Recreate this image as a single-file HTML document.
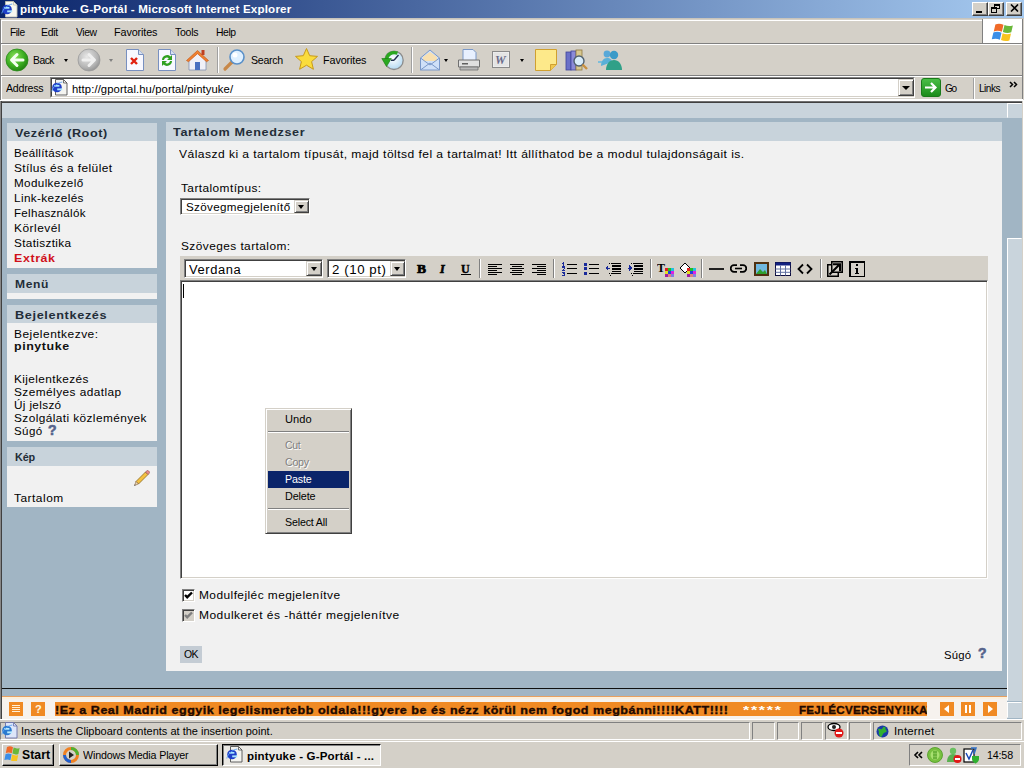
<!DOCTYPE html><html><head><meta charset="utf-8"><style>
*{margin:0;padding:0;box-sizing:border-box}
html,body{width:1024px;height:768px;overflow:hidden;position:relative;background:#d4d0c8}
body div{position:absolute}
.t{white-space:pre}
svg{display:block}
</style></head><body>
<div style="left:0px;top:0px;width:1024px;height:18px;background:linear-gradient(to right,#0a246a,#a6caf0)"></div>
<svg style="position:absolute;left:1px;top:1px" width="17" height="17" viewBox="0 0 17 17">
<path d="M4.5 0.5h8l3.5 3.5v12h-11.5z" fill="#f8f8f0" stroke="#c0c0b0" stroke-width="0.9"/>
<path d="M12.5 0.5v3.5h3.5" fill="none" stroke="#c0c0b0" stroke-width="0.8"/>
<circle cx="6" cy="8.5" r="4.8" fill="#1f3fc8"/>
<rect x="3.2" y="6" width="5.2" height="1.7" fill="#a8e4ff"/>
<rect x="6.2" y="9.4" width="5" height="1.9" fill="#a8e4ff"/>
<path d="M0.8 12.5c1-4.5 5-8.5 10.5-9.5" fill="none" stroke="#5aa0f0" stroke-width="0.9"/>
</svg>
<div class="t" style="left:19.5px;top:4px;font:bold 11px/11px 'Liberation Sans',sans-serif;color:#fff;letter-spacing:0.178px;transform:scaleX(1.0542);transform-origin:0 0;">pintyuke - G-Portál - Microsoft Internet Explorer</div>
<div style="left:972px;top:2px;width:16px;height:14px;background:#d4d0c8;border-top:1px solid #fff;border-left:1px solid #fff;border-right:1px solid #404040;border-bottom:1px solid #404040;box-shadow:inset -1px -1px #808080"></div>
<div style="left:988px;top:2px;width:16px;height:14px;background:#d4d0c8;border-top:1px solid #fff;border-left:1px solid #fff;border-right:1px solid #404040;border-bottom:1px solid #404040;box-shadow:inset -1px -1px #808080"></div>
<div style="left:1006px;top:2px;width:16px;height:14px;background:#d4d0c8;border-top:1px solid #fff;border-left:1px solid #fff;border-right:1px solid #404040;border-bottom:1px solid #404040;box-shadow:inset -1px -1px #808080"></div>
<div style="left:976px;top:11px;width:6px;height:2px;background:#000"></div>
<div style="left:994px;top:4px;width:6px;height:5px;border:1px solid #000;border-top-width:2px"></div>
<div style="left:991px;top:7px;width:6px;height:6px;border:1px solid #000;border-top-width:2px;background:#d4d0c8"></div>
<svg style="position:absolute;left:1010px;top:4px" width="9" height="8" viewBox="0 0 9 8"><path d="M1 0.5L8 7.5M8 0.5L1 7.5" stroke="#000" stroke-width="1.6"/></svg>
<div style="left:0px;top:18px;width:1024px;height:1px;background:#c8c4bc"></div>
<div style="left:0px;top:19px;width:1024px;height:749px;background:#d4d0c8"></div>
<div style="left:0px;top:19px;width:1px;height:700px;background:#808080"></div>
<div style="left:1022px;top:19px;width:1px;height:82px;background:#808080"></div>
<div style="left:1023px;top:19px;width:1px;height:82px;background:#d4d0c8"></div>
<div style="left:1px;top:20px;width:981px;height:1px;background:#fff"></div>
<div style="left:1px;top:20px;width:1px;height:24px;background:#fff"></div>
<div style="left:1px;top:43px;width:981px;height:1px;background:#808080"></div>
<div class="t" style="left:10.0px;top:27px;font:normal 11px/11px 'Liberation Sans',sans-serif;color:#000;letter-spacing:-0.469px;transform:scaleX(0.9260);transform-origin:0 0;">File</div>
<div class="t" style="left:41.0px;top:27px;font:normal 11px/11px 'Liberation Sans',sans-serif;color:#000;letter-spacing:-0.333px;transform:scaleX(0.9498);transform-origin:0 0;">Edit</div>
<div class="t" style="left:76.0px;top:27px;font:normal 11px/11px 'Liberation Sans',sans-serif;color:#000;letter-spacing:-0.477px;transform:scaleX(0.9430);transform-origin:0 0;">View</div>
<div class="t" style="left:114.0px;top:27px;font:normal 11px/11px 'Liberation Sans',sans-serif;color:#000;letter-spacing:-0.111px;transform:scaleX(0.9810);transform-origin:0 0;">Favorites</div>
<div class="t" style="left:175.0px;top:27px;font:normal 11px/11px 'Liberation Sans',sans-serif;color:#000;letter-spacing:-0.284px;transform:scaleX(0.9584);transform-origin:0 0;">Tools</div>
<div class="t" style="left:216.0px;top:27px;font:normal 11px/11px 'Liberation Sans',sans-serif;color:#000;letter-spacing:-0.442px;transform:scaleX(0.9443);transform-origin:0 0;">Help</div>
<div style="left:982px;top:19px;width:40px;height:25px;background:#fff;border-left:1px solid #808080;border-bottom:1px solid #808080"></div>
<svg style="position:absolute;left:990.6px;top:22.5px" width="27.5" height="19.8" viewBox="0 0 22 20" preserveAspectRatio="none">
<path d="M3.5 1.5c2-1 4-1 6.5 0.3l-1.3 7c-2.2-1.2-4.5-1.2-6.5-0.3z" fill="#f06a28"/>
<path d="M10.8 2c2.2 1.2 4.4 1.3 6.7 0.4l-1.3 7c-2.2 0.9-4.5 0.8-6.7-0.4z" fill="#6ab83a"/>
<path d="M1.9 9.5c2-0.9 4.3-0.9 6.5 0.3l-1.3 7c-2.2-1.2-4.5-1.2-6.5-0.3z" fill="#3a8ee8"/>
<path d="M9.3 10.3c2.2 1.2 4.4 1.3 6.7 0.4l-1.3 7c-2.2 0.9-4.5 0.8-6.7-0.4z" fill="#f8c420"/>
</svg>
<div style="left:1px;top:44px;width:1021px;height:1px;background:#fff"></div>
<div style="left:1px;top:44px;width:1px;height:32px;background:#fff"></div>
<div style="left:1px;top:75px;width:1021px;height:1px;background:#808080"></div>
<svg style="position:absolute;left:5px;top:48px" width="24" height="24" viewBox="0 0 24 24">
<defs><radialGradient id="gb" cx="0.4" cy="0.35" r="0.7"><stop offset="0" stop-color="#8de05a"/><stop offset="0.6" stop-color="#3cae22"/><stop offset="1" stop-color="#1f7d10"/></radialGradient></defs>
<circle cx="12" cy="12" r="11" fill="url(#gb)" stroke="#2a8a1a" stroke-width="0.8"/>
<path d="M18 12H7M12 6.5L6.5 12l5.5 5.5" fill="none" stroke="#f4fff0" stroke-width="3" stroke-linecap="round" stroke-linejoin="round"/>
</svg>
<div class="t" style="left:33.0px;top:55px;font:normal 11px/11px 'Liberation Sans',sans-serif;color:#000;letter-spacing:-0.523px;transform:scaleX(0.9408);transform-origin:0 0;">Back</div>
<div style="left:64px;top:59px;width:0;height:0;border-left:2.5px solid transparent;border-right:2.5px solid transparent;border-top:3px solid #000"></div>
<svg style="position:absolute;left:77px;top:48px" width="24" height="24" viewBox="0 0 24 24">
<defs><radialGradient id="gf" cx="0.4" cy="0.35" r="0.7"><stop offset="0" stop-color="#e8e8e8"/><stop offset="0.7" stop-color="#b4b4b4"/><stop offset="1" stop-color="#909090"/></radialGradient></defs>
<circle cx="12" cy="12" r="11" fill="url(#gf)" stroke="#9a9a9a" stroke-width="0.8"/>
<path d="M6 12h11M12 6.5l5.5 5.5-5.5 5.5" fill="none" stroke="#f0f0f0" stroke-width="3" stroke-linecap="round" stroke-linejoin="round"/>
</svg>
<div style="left:109px;top:59px;width:0;height:0;border-left:2.5px solid transparent;border-right:2.5px solid transparent;border-top:3px solid #808080"></div>
<svg style="position:absolute;left:124px;top:48px" width="22" height="24" viewBox="0 0 22 24">
<path d="M2.5 1.5h12l5 5v16h-17z" fill="#f8f8ff" stroke="#7890c0" stroke-width="1"/>
<path d="M14.5 1.5v5h5" fill="#d8e0f0" stroke="#7890c0" stroke-width="1"/>
<path d="M7 10l6 6M13 10l-6 6" stroke="#e02010" stroke-width="2.4"/>
</svg>
<svg style="position:absolute;left:156px;top:48px" width="22" height="24" viewBox="0 0 22 24">
<path d="M2.5 1.5h12l5 5v16h-17z" fill="#f8f8ff" stroke="#7890c0" stroke-width="1"/>
<path d="M14.5 1.5v5h5" fill="#d8e0f0" stroke="#7890c0" stroke-width="1"/>
<path d="M6 12a5 5 0 0 1 8.5-3.5l1.5-1.5v5h-5l1.8-1.8a3 3 0 0 0-4.8 1.8z" fill="#30a020"/>
<path d="M16 13a5 5 0 0 1-8.5 3.5l-1.5 1.5v-5h5l-1.8 1.8a3 3 0 0 0 4.8-1.8z" fill="#30a020"/>
</svg>
<svg style="position:absolute;left:185px;top:47px" width="25" height="25" viewBox="0 0 25 25">
<path d="M4 12v11h17v-11l-8.5-7z" fill="#f0f0f8" stroke="#8090b0" stroke-width="0.8"/>
<path d="M1.5 13.5l11-10 11 10-2 1.2-9-8-9 8z" fill="#f08030" stroke="#c05010" stroke-width="0.6"/>
<rect x="16.5" y="3" width="3" height="5" fill="#c04020"/>
<rect x="10" y="15" width="5" height="8" fill="#4a70c0"/>
</svg>
<div style="left:217px;top:47px;width:1px;height:26px;background:#a0a0a0;box-shadow:1px 0 #fff"></div>
<svg style="position:absolute;left:222px;top:48px" width="25" height="24" viewBox="0 0 25 24">
<line x1="3" y1="21" x2="10" y2="14" stroke="#c88848" stroke-width="3.2" stroke-linecap="round"/>
<circle cx="15" cy="9" r="7" fill="#dff0ff" stroke="#5a90c8" stroke-width="1.6"/>
<circle cx="13" cy="7" r="2.5" fill="#fff"/>
</svg>
<div class="t" style="left:251.0px;top:55px;font:normal 11px/11px 'Liberation Sans',sans-serif;color:#000;letter-spacing:-0.285px;transform:scaleX(0.9606);transform-origin:0 0;">Search</div>
<svg style="position:absolute;left:294px;top:47px" width="25" height="25" viewBox="0 0 25 25">
<path d="M12.5 1.5l3.2 7.2 7.8 0.7-5.9 5.2 1.8 7.7-6.9-4.1-6.9 4.1 1.8-7.7-5.9-5.2 7.8-0.7z" fill="#fadc3c" stroke="#c89a18" stroke-width="1"/>
</svg>
<div class="t" style="left:323.0px;top:55px;font:normal 11px/11px 'Liberation Sans',sans-serif;color:#000;letter-spacing:-0.111px;transform:scaleX(0.9810);transform-origin:0 0;">Favorites</div>
<svg style="position:absolute;left:380px;top:48px" width="25" height="24" viewBox="0 0 25 24">
<defs><radialGradient id="gh" cx="0.45" cy="0.4" r="0.7"><stop offset="0" stop-color="#ffffff"/><stop offset="1" stop-color="#a8d4f0"/></radialGradient></defs>
<circle cx="14" cy="12.3" r="9.2" fill="url(#gh)" stroke="#8c8c8c" stroke-width="1.3"/>
<path d="M14 12.3L18.5 7M14 12.3h-3" stroke="#203050" stroke-width="1.4" fill="none"/>
<path d="M17.5 5.2C12 3.5 7 6 6.5 11.5" fill="none" stroke="#2aa820" stroke-width="3.4"/>
<path d="M1.8 10.5h9.5l-4.8 8z" fill="#2aa820" stroke="#1a7a10" stroke-width="0.6"/>
</svg>
<div style="left:411px;top:47px;width:1px;height:26px;background:#a0a0a0;box-shadow:1px 0 #fff"></div>
<svg style="position:absolute;left:419px;top:48px" width="22" height="24" viewBox="0 0 22 24">
<path d="M1.5 10l9.5-8 9.5 8v12h-19z" fill="#cfe0f8" stroke="#7a98c8" stroke-width="1"/>
<path d="M4 9l7-5 7 5v4h-14z" fill="#f8e0b0"/>
<path d="M1.5 22l9.5-7 9.5 7M1.5 10l9.5 7 9.5-7" fill="none" stroke="#7a98c8" stroke-width="1"/>
</svg>
<div style="left:444px;top:59px;width:0;height:0;border-left:2.5px solid transparent;border-right:2.5px solid transparent;border-top:3px solid #000"></div>
<svg style="position:absolute;left:457px;top:48px" width="24" height="24" viewBox="0 0 24 24">
<path d="M6 1.5h10l3 3v8h-13z" fill="#e8f0ff" stroke="#7a98c8" stroke-width="1"/>
<path d="M1.5 12h21v7h-21z" fill="#e0e0e0" stroke="#707070" stroke-width="1"/>
<path d="M3 19h18v3h-18z" fill="#b8b8b8" stroke="#707070" stroke-width="0.8"/>
<rect x="5" y="15" width="6" height="1.5" fill="#606060"/>
</svg>
<svg style="position:absolute;left:492px;top:51px" width="18" height="17" viewBox="0 0 18 17">
<rect x="0.5" y="0.5" width="17" height="16" fill="#f4f4f4" stroke="#8a8a8a"/>
<rect x="1.5" y="1.5" width="15" height="14" fill="#e4e4e4"/>
<text x="3" y="13" font-family="Liberation Serif" font-style="italic" font-weight="bold" font-size="12" fill="#6a6a8a">W</text>
</svg>
<div style="left:520px;top:59px;width:0;height:0;border-left:2.5px solid transparent;border-right:2.5px solid transparent;border-top:3px solid #000"></div>
<svg style="position:absolute;left:534px;top:48px" width="24" height="24" viewBox="0 0 24 24">
<path d="M1.5 1.5h21v15l-6 6h-15z" fill="#fde98a" stroke="#d0a030" stroke-width="1"/>
<path d="M16.5 22.5v-6h6" fill="#f0c850" stroke="#d0a030" stroke-width="1"/>
</svg>
<svg style="position:absolute;left:565px;top:48px" width="24" height="24" viewBox="0 0 24 24">
<rect x="1" y="4" width="5" height="18" fill="#6a70c8" stroke="#40449a" stroke-width="0.8"/>
<rect x="6" y="3" width="5" height="19" fill="#8a8ad8" stroke="#40449a" stroke-width="0.8"/>
<rect x="11" y="2" width="6" height="20" fill="#d8c890" stroke="#907840" stroke-width="0.8"/>
<circle cx="14" cy="13" r="5" fill="#d8ecfa" stroke="#506070" stroke-width="1.4"/>
<line x1="17.5" y1="16.5" x2="22" y2="21" stroke="#c89040" stroke-width="2.4"/>
</svg>
<svg style="position:absolute;left:598px;top:48px" width="25" height="24" viewBox="0 0 25 24">
<circle cx="9" cy="6" r="3.4" fill="#58a8d8"/>
<path d="M3 18c0-5 2.5-8 6-8s5 2 5 4" fill="#5ab0d8"/>
<circle cx="16" cy="7" r="4.2" fill="#3a9ac8"/>
<path d="M8 22c0-6 3.5-10 8-10s8 4 8 10z" fill="#30a088"/>
<path d="M0 14l4 0" stroke="#60b8e0" stroke-width="1.5"/>
</svg>
<div style="left:1px;top:76px;width:1021px;height:1px;background:#fff"></div>
<div style="left:1px;top:76px;width:1px;height:24px;background:#fff"></div>
<div class="t" style="left:6.0px;top:83px;font:normal 11px/11px 'Liberation Sans',sans-serif;color:#000;letter-spacing:-0.246px;transform:scaleX(0.9651);transform-origin:0 0;">Address</div>
<div style="left:50px;top:77px;width:865px;height:21px;background:#fff;border-top:1px solid #808080;border-left:1px solid #808080;border-bottom:1px solid #fff;border-right:1px solid #fff"></div>
<div style="left:51px;top:78px;width:863px;height:19px;border-top:1px solid #404040;border-left:1px solid #404040;border-bottom:1px solid #d4d0c8;border-right:1px solid #d4d0c8"></div>
<svg style="position:absolute;left:51px;top:79px" width="17" height="17" viewBox="0 0 17 17">
<path d="M4.5 0.5h8l3.5 3.5v12h-11.5z" fill="#f4f4f0" stroke="#505050" stroke-width="0.9"/>
<path d="M12.5 0.5v3.5h3.5" fill="none" stroke="#505050" stroke-width="0.8"/>
<circle cx="6" cy="8.5" r="4.8" fill="#1f3fc8"/>
<rect x="3.2" y="6" width="5.2" height="1.7" fill="#a8e4ff"/>
<rect x="6.2" y="9.4" width="5" height="1.9" fill="#a8e4ff"/>
<path d="M0.8 12.5c1-4.5 5-8.5 10.5-9.5" fill="none" stroke="#5aa0f0" stroke-width="0.9"/>
</svg>
<div class="t" style="left:72.0px;top:84px;font:normal 11px/11px 'Liberation Sans',sans-serif;color:#000;letter-spacing:0.103px;transform:scaleX(1.0224);transform-origin:0 0;">http://gportal.hu/portal/pintyuke/</div>
<div style="left:898px;top:79px;width:16px;height:17px;background:#d4d0c8;border-top:1px solid #d4d0c8;border-left:1px solid #d4d0c8;border-right:1px solid #404040;border-bottom:1px solid #404040;box-shadow:inset 1px 1px #fff,inset -1px -1px #808080"></div>
<div style="left:902px;top:86px;width:0;height:0;border-left:4px solid transparent;border-right:4px solid transparent;border-top:4px solid #000"></div>
<svg style="position:absolute;left:921px;top:78px" width="20" height="19" viewBox="0 0 20 19">
<defs><linearGradient id="gg" x1="0" y1="0" x2="0" y2="1"><stop offset="0" stop-color="#4cc048"/><stop offset="1" stop-color="#1a8a1a"/></linearGradient></defs>
<rect x="0.5" y="0.5" width="19" height="18" rx="2.5" fill="url(#gg)" stroke="#1a7a1a"/>
<path d="M4 9.5h10M10 5l4.5 4.5-4.5 4.5" fill="none" stroke="#fff" stroke-width="2.2"/>
</svg>
<div class="t" style="left:945.0px;top:83px;font:normal 11px/11px 'Liberation Sans',sans-serif;color:#000;letter-spacing:-1.401px;transform:scaleX(0.9122);transform-origin:0 0;">Go</div>
<div style="left:973px;top:78px;width:1px;height:21px;background:#a0a0a0;box-shadow:1px 0 #fff"></div>
<div class="t" style="left:979.0px;top:83px;font:normal 11px/11px 'Liberation Sans',sans-serif;color:#000;letter-spacing:-0.568px;transform:scaleX(0.9202);transform-origin:0 0;">Links</div>
<svg style="position:absolute;left:1009px;top:81px" width="10" height="7" viewBox="0 0 10 7"><path d="M1 1l2.5 2.5L1 6M5 1l2.5 2.5L5 6" fill="none" stroke="#000" stroke-width="1.5"/></svg>
<div style="left:1px;top:99px;width:1022px;height:1px;background:#fff"></div>
<div style="left:0px;top:100px;width:1024px;height:1px;background:#fff"></div>
<div style="left:0px;top:101px;width:1023px;height:1px;background:#707070"></div>
<div style="left:0px;top:102px;width:1023px;height:1px;background:#404040"></div>
<div style="left:0px;top:101px;width:1px;height:618px;background:#888888"></div>
<div style="left:1px;top:101px;width:1px;height:618px;background:#404040"></div>
<div style="left:1022px;top:101px;width:1px;height:618px;background:#d4d0c8"></div>
<div style="left:1023px;top:101px;width:1px;height:618px;background:#fff"></div>
<div style="left:2px;top:103px;width:1020px;height:616px;background:#a1b5c4"></div>
<div style="left:2px;top:103px;width:1005px;height:15px;background:#c9d4dc"></div>
<div style="left:7px;top:123px;width:150px;height:145px;background:#f1f1f1"></div>
<div style="left:7px;top:123px;width:150px;height:18px;background:#c8d3db"></div>
<div class="t" style="left:14.5px;top:128px;font:bold 11px/11px 'Liberation Sans',sans-serif;color:#232d38;letter-spacing:0.489px;transform:scaleX(1.1471);transform-origin:0 0;">Vezérlő (Root)</div>
<div class="t" style="left:14.0px;top:148px;font:normal 11px/11px 'Liberation Sans',sans-serif;color:#000;letter-spacing:0.270px;transform:scaleX(1.0524);transform-origin:0 0;">Beállítások</div>
<div class="t" style="left:14.0px;top:163px;font:normal 11px/11px 'Liberation Sans',sans-serif;color:#000;letter-spacing:0.366px;transform:scaleX(1.0853);transform-origin:0 0;">Stílus és a felület</div>
<div class="t" style="left:14.0px;top:178px;font:normal 11px/11px 'Liberation Sans',sans-serif;color:#000;letter-spacing:0.347px;transform:scaleX(1.0597);transform-origin:0 0;">Modulkezelő</div>
<div class="t" style="left:14.0px;top:193px;font:normal 11px/11px 'Liberation Sans',sans-serif;color:#000;letter-spacing:0.356px;transform:scaleX(1.0678);transform-origin:0 0;">Link-kezelés</div>
<div class="t" style="left:14.0px;top:208px;font:normal 11px/11px 'Liberation Sans',sans-serif;color:#000;letter-spacing:0.289px;transform:scaleX(1.0512);transform-origin:0 0;">Felhasználók</div>
<div class="t" style="left:14.0px;top:223px;font:normal 11px/11px 'Liberation Sans',sans-serif;color:#000;letter-spacing:0.441px;transform:scaleX(1.0853);transform-origin:0 0;">Körlevél</div>
<div class="t" style="left:14.0px;top:238px;font:normal 11px/11px 'Liberation Sans',sans-serif;color:#000;letter-spacing:0.327px;transform:scaleX(1.0685);transform-origin:0 0;">Statisztika</div>
<div class="t" style="left:14.0px;top:253px;font:bold 11px/11px 'Liberation Sans',sans-serif;color:#d0101a;letter-spacing:0.530px;transform:scaleX(1.1301);transform-origin:0 0;">Extrák</div>
<div style="left:7px;top:274px;width:150px;height:25px;background:#f1f1f1"></div>
<div style="left:7px;top:274px;width:150px;height:19px;background:#c8d3db"></div>
<div class="t" style="left:14.5px;top:279px;font:bold 11px/11px 'Liberation Sans',sans-serif;color:#232d38;letter-spacing:0.547px;transform:scaleX(1.0964);transform-origin:0 0;">Menü</div>
<div style="left:7px;top:305px;width:150px;height:136px;background:#f1f1f1"></div>
<div style="left:7px;top:305px;width:150px;height:18px;background:#c8d3db"></div>
<div class="t" style="left:14.5px;top:310px;font:bold 11px/11px 'Liberation Sans',sans-serif;color:#232d38;letter-spacing:0.544px;transform:scaleX(1.1557);transform-origin:0 0;">Bejelentkezés</div>
<div class="t" style="left:14.0px;top:329px;font:normal 11px/11px 'Liberation Sans',sans-serif;color:#000;letter-spacing:0.443px;transform:scaleX(1.0875);transform-origin:0 0;">Bejelentkezve:</div>
<div class="t" style="left:14.0px;top:341px;font:bold 11px/11px 'Liberation Sans',sans-serif;color:#111;letter-spacing:0.499px;transform:scaleX(1.1315);transform-origin:0 0;">pinytuke</div>
<div class="t" style="left:14.0px;top:374px;font:normal 11px/11px 'Liberation Sans',sans-serif;color:#000;letter-spacing:0.376px;transform:scaleX(1.0742);transform-origin:0 0;">Kijelentkezés</div>
<div class="t" style="left:14.0px;top:387px;font:normal 11px/11px 'Liberation Sans',sans-serif;color:#000;letter-spacing:0.412px;transform:scaleX(1.0764);transform-origin:0 0;">Személyes adatlap</div>
<div class="t" style="left:14.0px;top:400px;font:normal 11px/11px 'Liberation Sans',sans-serif;color:#000;letter-spacing:0.325px;transform:scaleX(1.0670);transform-origin:0 0;">Új jelszó</div>
<div class="t" style="left:14.0px;top:413px;font:normal 11px/11px 'Liberation Sans',sans-serif;color:#000;letter-spacing:0.388px;transform:scaleX(1.0760);transform-origin:0 0;">Szolgálati közlemények</div>
<div class="t" style="left:14.0px;top:426px;font:normal 11px/11px 'Liberation Sans',sans-serif;color:#000;letter-spacing:0.386px;transform:scaleX(1.0475);transform-origin:0 0;">Súgó</div>
<div class="t" style="left:48.0px;top:423px;font:bold 14px/14px 'Liberation Sans',sans-serif;color:#56648c;letter-spacing:0.000px;-webkit-text-stroke:0.6px #56648c">?</div>
<div style="left:7px;top:447px;width:150px;height:60px;background:#f1f1f1"></div>
<div style="left:7px;top:447px;width:150px;height:19px;background:#c8d3db"></div>
<div class="t" style="left:14.5px;top:452px;font:bold 11px/11px 'Liberation Sans',sans-serif;color:#232d38;letter-spacing:-0.114px;transform:scaleX(0.9840);transform-origin:0 0;">Kép</div>
<svg style="position:absolute;left:133px;top:470px" width="17" height="17" viewBox="0 0 17 17">
<path d="M3 11.5L12.5 2l2.5 2.5L5.5 14z" fill="#f4c040" stroke="#8a6a20" stroke-width="0.8"/>
<path d="M12.5 2l1.2-1.2a1.2 1.2 0 0 1 1.7 0l0.8 0.8a1.2 1.2 0 0 1 0 1.7L15 4.5z" fill="#e88a8a" stroke="#8a4a4a" stroke-width="0.6"/>
<path d="M3 11.5l2.5 2.5-3.8 1.3z" fill="#f0d8b0" stroke="#806040" stroke-width="0.6"/>
<path d="M1.2 15.8l1.4-0.5-0.9-0.9z" fill="#222"/>
</svg>
<div class="t" style="left:14.0px;top:493px;font:normal 11px/11px 'Liberation Sans',sans-serif;color:#000;letter-spacing:0.461px;transform:scaleX(1.0831);transform-origin:0 0;">Tartalom</div>
<div style="left:166px;top:122px;width:836px;height:549px;background:#f1f1f1"></div>
<div style="left:166px;top:122px;width:836px;height:19px;background:#c8d3db"></div>
<div class="t" style="left:173.2px;top:127px;font:bold 11px/11px 'Liberation Sans',sans-serif;color:#232d38;letter-spacing:0.536px;transform:scaleX(1.1476);transform-origin:0 0;">Tartalom Menedzser</div>
<div class="t" style="left:179.0px;top:149px;font:normal 11px/11px 'Liberation Sans',sans-serif;color:#000;letter-spacing:0.409px;transform:scaleX(1.0978);transform-origin:0 0;">Válaszd ki a tartalom típusát, majd töltsd fel a tartalmat! Itt állíthatod be a modul tulajdonságait is.</div>
<div class="t" style="left:181.0px;top:183px;font:normal 11px/11px 'Liberation Sans',sans-serif;color:#000;letter-spacing:0.391px;transform:scaleX(1.0795);transform-origin:0 0;">Tartalomtípus:</div>
<div style="left:180px;top:198px;width:130px;height:17px;background:#fff;border-top:1px solid #808080;border-left:1px solid #808080;border-bottom:1px solid #fff;border-right:1px solid #fff;box-shadow:inset 1px 1px #404040,inset -1px -1px #d4d0c8"></div>
<div class="t" style="left:186.0px;top:202px;font:normal 11px/11px 'Liberation Sans',sans-serif;color:#000;letter-spacing:0.312px;transform:scaleX(1.0565);transform-origin:0 0;">Szövegmegjelenítő</div>
<div style="left:294px;top:200px;width:15px;height:13px;background:#d4d0c8;border-top:1px solid #d4d0c8;border-left:1px solid #d4d0c8;border-bottom:1px solid #404040;border-right:1px solid #404040;box-shadow:inset 1px 1px #fff,inset -1px -1px #808080"></div>
<div style="left:297.5px;top:205px;width:0;height:0;border-left:3.5px solid transparent;border-right:3.5px solid transparent;border-top:4px solid #000"></div>
<div class="t" style="left:181.0px;top:241px;font:normal 11px/11px 'Liberation Sans',sans-serif;color:#000;letter-spacing:0.406px;transform:scaleX(1.0792);transform-origin:0 0;">Szöveges tartalom:</div>
<div style="left:180px;top:256px;width:808px;height:24px;background:#d4d0c8"></div>
<div style="left:184px;top:259px;width:139px;height:19px;background:#fff;border-top:1px solid #808080;border-left:1px solid #808080;border-bottom:1px solid #fff;border-right:1px solid #fff;box-shadow:inset 1px 1px #404040,inset -1px -1px #d4d0c8"></div>
<div class="t" style="left:189.0px;top:264px;font:normal 12px/12px 'Liberation Sans',sans-serif;color:#000;letter-spacing:0.539px;transform:scaleX(1.0774);transform-origin:0 0;">Verdana</div>
<div style="left:306px;top:261px;width:16px;height:15px;background:#d4d0c8;border-top:1px solid #d4d0c8;border-left:1px solid #d4d0c8;border-bottom:1px solid #404040;border-right:1px solid #404040;box-shadow:inset 1px 1px #fff,inset -1px -1px #808080"></div>
<div style="left:310.5px;top:267px;width:0;height:0;border-left:3.5px solid transparent;border-right:3.5px solid transparent;border-top:4px solid #000"></div>
<div style="left:327px;top:259px;width:79px;height:19px;background:#fff;border-top:1px solid #808080;border-left:1px solid #808080;border-bottom:1px solid #fff;border-right:1px solid #fff;box-shadow:inset 1px 1px #404040,inset -1px -1px #d4d0c8"></div>
<div class="t" style="left:332.0px;top:264px;font:normal 12px/12px 'Liberation Sans',sans-serif;color:#000;letter-spacing:0.527px;transform:scaleX(1.1041);transform-origin:0 0;">2 (10 pt)</div>
<div style="left:390px;top:261px;width:15px;height:15px;background:#d4d0c8;border-top:1px solid #d4d0c8;border-left:1px solid #d4d0c8;border-bottom:1px solid #404040;border-right:1px solid #404040;box-shadow:inset 1px 1px #fff,inset -1px -1px #808080"></div>
<div style="left:393.5px;top:267px;width:0;height:0;border-left:3.5px solid transparent;border-right:3.5px solid transparent;border-top:4px solid #000"></div>
<div style="left:479px;top:259px;width:1px;height:19px;background:#808080;box-shadow:1px 0 #fff"></div>
<div style="left:553px;top:259px;width:1px;height:19px;background:#808080;box-shadow:1px 0 #fff"></div>
<div style="left:650px;top:259px;width:1px;height:19px;background:#808080;box-shadow:1px 0 #fff"></div>
<div style="left:701px;top:259px;width:1px;height:19px;background:#808080;box-shadow:1px 0 #fff"></div>
<div style="left:820px;top:259px;width:1px;height:19px;background:#808080;box-shadow:1px 0 #fff"></div>
<div class="t" style="left:417.0px;top:263px;font:bold 12px/12px 'Liberation Serif',serif;color:#000;letter-spacing:0.000px;transform:scaleX(1.1250);transform-origin:0 0;-webkit-text-stroke:0.7px #000">B</div>
<div class="t" style="left:440.0px;top:263px;font:bold 12px/12px 'Liberation Serif',serif;color:#000;letter-spacing:0.000px;font-style:italic;-webkit-text-stroke:0.6px #000">I</div>
<div class="t" style="left:461.0px;top:263px;font:bold 12px/12px 'Liberation Serif',serif;color:#000;letter-spacing:0.000px;-webkit-text-stroke:0.4px #000">U</div>
<div style="left:461px;top:274px;width:10px;height:1px;background:#000"></div>
<div style="left:488px;top:264px;width:14px;height:1px;background:#000"></div>
<div style="left:488px;top:266px;width:9px;height:1px;background:#000"></div>
<div style="left:488px;top:268px;width:14px;height:1px;background:#000"></div>
<div style="left:488px;top:270px;width:9px;height:1px;background:#000"></div>
<div style="left:488px;top:272px;width:14px;height:1px;background:#000"></div>
<div style="left:488px;top:274px;width:9px;height:1px;background:#000"></div>
<div style="left:510px;top:264px;width:14px;height:1px;background:#000"></div>
<div style="left:512px;top:266px;width:10px;height:1px;background:#000"></div>
<div style="left:510px;top:268px;width:14px;height:1px;background:#000"></div>
<div style="left:512px;top:270px;width:10px;height:1px;background:#000"></div>
<div style="left:510px;top:272px;width:14px;height:1px;background:#000"></div>
<div style="left:512px;top:274px;width:10px;height:1px;background:#000"></div>
<div style="left:532px;top:264px;width:14px;height:1px;background:#000"></div>
<div style="left:537px;top:266px;width:9px;height:1px;background:#000"></div>
<div style="left:532px;top:268px;width:14px;height:1px;background:#000"></div>
<div style="left:537px;top:270px;width:9px;height:1px;background:#000"></div>
<div style="left:532px;top:272px;width:14px;height:1px;background:#000"></div>
<div style="left:537px;top:274px;width:9px;height:1px;background:#000"></div>
<svg style="position:absolute;left:562px;top:262px" width="16" height="14" viewBox="0 0 16 14" shape-rendering="crispEdges">
<path d="M1 0h1v4h-1zM0 1h1v1h-1zM0 4h3v1h-3z" fill="#1a2a9a"/>
<path d="M0 5h3v1h-3zM2 6h1v1h-1zM1 7h1v1h-1zM0 8h3v1h-3z" fill="#1a2a9a"/>
<path d="M0 10h3v1h-3zM2 11h1v1h-1zM1 11h1v1h-1zM2 12h1v1h-1zM0 13h3v1h-3z" fill="#1a2a9a"/>
<rect x="5" y="2" width="10" height="1" fill="#000"/><rect x="5" y="6" width="10" height="1" fill="#000"/><rect x="5" y="11" width="10" height="1" fill="#000"/>
</svg>
<svg style="position:absolute;left:584px;top:262px" width="15" height="14" viewBox="0 0 15 14" shape-rendering="crispEdges">
<rect x="0" y="1" width="3" height="3" fill="#1a2a9a"/><rect x="0" y="5" width="3" height="3" fill="#1a2a9a"/><rect x="0" y="10" width="3" height="3" fill="#1a2a9a"/>
<rect x="5" y="2" width="10" height="1" fill="#000"/><rect x="5" y="6" width="10" height="1" fill="#000"/><rect x="5" y="11" width="10" height="1" fill="#000"/>
</svg>
<svg style="position:absolute;left:605px;top:262px" width="17" height="14" viewBox="0 0 17 14" shape-rendering="crispEdges">
<path d="M0 6l3-3v6z" fill="#1a2a9a"/><rect x="1" y="6" width="4" height="1" fill="#1a2a9a"/>
<rect x="6" y="1" width="10" height="1" fill="#000"/><rect x="7" y="3" width="9" height="2" fill="#000"/><rect x="7" y="6" width="9" height="2" fill="#000"/><rect x="7" y="9" width="9" height="1" fill="#000"/><rect x="6" y="11" width="10" height="1" fill="#000"/>
<rect x="4" y="1" width="1" height="1" fill="#000"/><rect x="4" y="11" width="1" height="1" fill="#000"/><rect x="5" y="13" width="1" height="1" fill="#000"/>
</svg>
<svg style="position:absolute;left:627px;top:262px" width="17" height="14" viewBox="0 0 17 14" shape-rendering="crispEdges">
<path d="M5 6l-3-3v6z" fill="#1a2a9a"/><rect x="1" y="6" width="4" height="1" fill="#1a2a9a"/>
<rect x="6" y="1" width="10" height="1" fill="#000"/><rect x="7" y="3" width="9" height="2" fill="#000"/><rect x="7" y="6" width="9" height="2" fill="#000"/><rect x="7" y="9" width="9" height="1" fill="#000"/><rect x="6" y="11" width="10" height="1" fill="#000"/>
<rect x="4" y="1" width="1" height="1" fill="#000"/><rect x="4" y="11" width="1" height="1" fill="#000"/><rect x="5" y="13" width="1" height="1" fill="#000"/>
</svg>
<svg style="position:absolute;left:657px;top:262px" width="17" height="15" viewBox="0 0 17 15">
<text x="0" y="10" font-family="Liberation Serif" font-size="12" font-weight="bold" fill="#000">T</text>
<rect x="8" y="6" width="3" height="3" fill="#e02020"/><rect x="11" y="6" width="3" height="3" fill="#20c020"/><rect x="14" y="6" width="3" height="3" fill="#20c0e0"/>
<rect x="8" y="9" width="3" height="3" fill="#e0e020"/><rect x="11" y="9" width="3" height="3" fill="#2040e0"/><rect x="14" y="9" width="3" height="3" fill="#e020e0"/>
<rect x="8" y="12" width="3" height="3" fill="#a020a0"/><rect x="11" y="12" width="3" height="3" fill="#e08080"/><rect x="14" y="12" width="3" height="3" fill="#8080e0"/>
</svg>
<svg style="position:absolute;left:679px;top:262px" width="17" height="15" viewBox="0 0 17 15">
<path d="M1 6l5-5 5 5-5 5z" fill="#fff" stroke="#000" stroke-width="1"/>
<rect x="8" y="6" width="3" height="3" fill="#e02020"/><rect x="11" y="6" width="3" height="3" fill="#20c020"/><rect x="14" y="6" width="3" height="3" fill="#20c0e0"/>
<rect x="8" y="9" width="3" height="3" fill="#e0e020"/><rect x="11" y="9" width="3" height="3" fill="#2040e0"/><rect x="14" y="9" width="3" height="3" fill="#e020e0"/>
<rect x="8" y="12" width="3" height="3" fill="#a020a0"/><rect x="11" y="12" width="3" height="3" fill="#e08080"/><rect x="14" y="12" width="3" height="3" fill="#8080e0"/>
</svg>
<div style="left:709px;top:268px;width:15px;height:2px;background:#202020"></div>
<svg style="position:absolute;left:730px;top:264px" width="17" height="9" viewBox="0 0 17 9">
<path d="M7 1.2H4a3.3 3.3 0 0 0 0 6.6h3M10 1.2h3a3.3 3.3 0 0 1 0 6.6h-3" fill="none" stroke="#000" stroke-width="1.8"/>
<path d="M5 4.5h7" stroke="#000" stroke-width="1.6"/>
</svg>
<svg style="position:absolute;left:754px;top:262px" width="15" height="14" viewBox="0 0 15 14">
<rect x="0" y="0" width="15" height="14" fill="#503010"/>
<rect x="2" y="2" width="11" height="10" fill="#70b8e0"/>
<path d="M2 12l4-5 3 3 2-2 2 4z" fill="#30a030"/>
</svg>
<svg style="position:absolute;left:775px;top:262px" width="16" height="14" viewBox="0 0 16 14">
<rect x="0.5" y="0.5" width="15" height="13" fill="#fff" stroke="#101040"/>
<rect x="0.5" y="0.5" width="15" height="3" fill="#102080"/>
<path d="M0.5 7h15M0.5 10.3h15M5.5 3.5v10M10.5 3.5v10" stroke="#6070a0" stroke-width="1"/>
</svg>
<svg style="position:absolute;left:797px;top:263px" width="16" height="12" viewBox="0 0 16 12">
<path d="M6 1.5L1.5 6 6 10.5M10 1.5L14.5 6 10 10.5" fill="none" stroke="#000" stroke-width="1.8"/>
</svg>
<svg style="position:absolute;left:827px;top:261px" width="17" height="17" viewBox="0 0 17 17">
<rect x="0.75" y="3.75" width="10.5" height="11.5" fill="none" stroke="#000" stroke-width="1.5"/>
<rect x="4.75" y="0.75" width="10.5" height="10.5" fill="#d4d0c8" stroke="#000" stroke-width="1.5"/>
<path d="M2.5 13.5L12.5 3.5M6 3.2h7v7" fill="none" stroke="#000" stroke-width="2"/>
</svg>
<svg style="position:absolute;left:849px;top:261px" width="16" height="16" viewBox="0 0 16 16" shape-rendering="crispEdges">
<rect x="0.75" y="0.75" width="14.5" height="14.5" fill="none" stroke="#000" stroke-width="1.5"/>
<rect x="7" y="3" width="2" height="2" fill="#000"/>
<rect x="7" y="7" width="2" height="6" fill="#000"/><rect x="6" y="7" width="1" height="1" fill="#000"/><rect x="6" y="12" width="4" height="1" fill="#000"/>
</svg>
<div style="left:180px;top:280px;width:808px;height:299px;background:#fff;border-top:1px solid #808080;border-left:1px solid #808080;border-bottom:1px solid #fff;border-right:1px solid #fff;box-shadow:inset 1px 1px #404040,inset -1px -1px #d4d0c8"></div>
<div style="left:183px;top:284px;width:1px;height:14px;background:#000"></div>
<div style="left:265px;top:408px;width:87px;height:126px;background:#d4d0c8;border-top:1px solid #d4d0c8;border-left:1px solid #d4d0c8;border-bottom:1px solid #404040;border-right:1px solid #404040;box-shadow:inset 1px 1px #fff,inset -1px -1px #808080"></div>
<div class="t" style="left:284.5px;top:414px;font:normal 11px/11px 'Liberation Sans',sans-serif;color:#000;letter-spacing:0.053px;transform:scaleX(1.0061);transform-origin:0 0;">Undo</div>
<div style="left:268px;top:431px;width:81px;height:1px;background:#808080;box-shadow:0 1px #fff"></div>
<div class="t" style="left:284.5px;top:440px;font:normal 11px/11px 'Liberation Sans',sans-serif;color:#808080;letter-spacing:-0.409px;transform:scaleX(0.9542);transform-origin:0 0;text-shadow:1px 1px #fff">Cut</div>
<div class="t" style="left:284.5px;top:457px;font:normal 11px/11px 'Liberation Sans',sans-serif;color:#808080;letter-spacing:-0.289px;transform:scaleX(0.9679);transform-origin:0 0;text-shadow:1px 1px #fff">Copy</div>
<div style="left:268px;top:471px;width:81px;height:17px;background:#0a246a"></div>
<div class="t" style="left:284.5px;top:474px;font:normal 11px/11px 'Liberation Sans',sans-serif;color:#fff;letter-spacing:-0.194px;transform:scaleX(0.9730);transform-origin:0 0;">Paste</div>
<div class="t" style="left:284.5px;top:491px;font:normal 11px/11px 'Liberation Sans',sans-serif;color:#000;letter-spacing:-0.120px;transform:scaleX(0.9814);transform-origin:0 0;">Delete</div>
<div style="left:268px;top:508px;width:81px;height:1px;background:#808080;box-shadow:0 1px #fff"></div>
<div class="t" style="left:284.5px;top:517px;font:normal 11px/11px 'Liberation Sans',sans-serif;color:#000;letter-spacing:-0.167px;transform:scaleX(0.9680);transform-origin:0 0;">Select All</div>
<div style="left:182px;top:589px;width:13px;height:13px;background:#fff;border-top:1px solid #808080;border-left:1px solid #808080;border-bottom:1px solid #fff;border-right:1px solid #fff;box-shadow:inset 1px 1px #404040,inset -1px -1px #d4d0c8"></div>
<svg style="position:absolute;left:182px;top:589px" width="13" height="13" viewBox="0 0 13 13"><path d="M3 6l2.2 2.2L10 3.5" fill="none" stroke="#000" stroke-width="2.4"/></svg>
<div style="left:182px;top:609px;width:13px;height:13px;background:#d4d0c8;border-top:1px solid #808080;border-left:1px solid #808080;border-bottom:1px solid #fff;border-right:1px solid #fff;box-shadow:inset 1px 1px #404040,inset -1px -1px #d4d0c8"></div>
<svg style="position:absolute;left:182px;top:609px" width="13" height="13" viewBox="0 0 13 13"><path d="M3 6l2.2 2.2L10 3.5" fill="none" stroke="#808080" stroke-width="2.4"/></svg>
<div class="t" style="left:199.0px;top:590px;font:normal 11px/11px 'Liberation Sans',sans-serif;color:#000;letter-spacing:0.403px;transform:scaleX(1.0829);transform-origin:0 0;">Modulfejléc megjelenítve</div>
<div class="t" style="left:199.0px;top:610px;font:normal 11px/11px 'Liberation Sans',sans-serif;color:#000;letter-spacing:0.427px;transform:scaleX(1.0909);transform-origin:0 0;">Modulkeret és -háttér megjelenítve</div>
<div style="left:180px;top:646px;width:22px;height:17px;background:#c4ccd4"></div>
<div class="t" style="left:184.0px;top:649px;font:normal 11px/11px 'Liberation Sans',sans-serif;color:#000;letter-spacing:-0.816px;transform:scaleX(0.9530);transform-origin:0 0;">OK</div>
<div class="t" style="left:944.0px;top:650px;font:normal 11px/11px 'Liberation Sans',sans-serif;color:#000;letter-spacing:0.231px;transform:scaleX(1.0279);transform-origin:0 0;">Súgó</div>
<div class="t" style="left:978.0px;top:646px;font:bold 14px/14px 'Liberation Sans',sans-serif;color:#56648c;letter-spacing:0.000px;-webkit-text-stroke:0.6px #56648c">?</div>
<div style="left:2px;top:688px;width:1005px;height:1px;background:#101010"></div>
<div style="left:1007px;top:103px;width:15px;height:15px;background:#c9d4dc;border-top:1px solid #fff;border-left:1px solid #fff;border-right:1px solid #c9d4dc;border-bottom:1px solid #c9d4dc"></div>
<div style="left:1007px;top:238px;width:15px;height:463px;background:#c9d4dc;border-top:1px solid #fff;border-left:1px solid #fff;border-right:1px solid #c9d4dc;border-bottom:1px solid #c9d4dc"></div>
<div style="left:1007px;top:702px;width:15px;height:16px;background:#c9d4dc;border-top:1px solid #fff;border-left:1px solid #fff;border-right:1px solid #c9d4dc;border-bottom:1px solid #c9d4dc"></div>
<div style="left:2px;top:696px;width:1005px;height:1px;background:#e8a060"></div>
<div style="left:2px;top:697px;width:1005px;height:22px;background:#f6f2ee"></div>
<div style="left:2px;top:697px;width:1005px;height:2px;background:#fbf0dc"></div>
<div style="left:9px;top:702px;width:14px;height:14px;background:#f08a24"></div>
<div style="left:12px;top:705px;width:8px;height:1px;background:#fff0d8"></div>
<div style="left:12px;top:707px;width:8px;height:1px;background:#fff0d8"></div>
<div style="left:12px;top:709px;width:8px;height:1px;background:#fff0d8"></div>
<div style="left:12px;top:711px;width:8px;height:1px;background:#fff0d8"></div>
<div style="left:31px;top:702px;width:14px;height:14px;background:#f08a24"></div>
<div class="t" style="left:35px;top:704px;font:bold 11px/11px 'Liberation Sans',sans-serif;color:#fff8e0;">?</div>
<div style="left:55px;top:702px;width:872px;height:14px;background:#f08a24;overflow:hidden"></div>
<div style="left:55px;top:702px;width:872px;height:14px;overflow:hidden">
<div class="t" style="left:-0.14px;top:3px;font:bold 11px/11px 'Liberation Sans',sans-serif;color:#200800;letter-spacing:0.443px;transform:scaleX(1.1410);transform-origin:0 0;-webkit-text-stroke:0.35px #200800">!Ez a Real Madrid eggyik legelismertebb oldala!!!gyere be és nézz körül nem fogod megbánni!!!!KATT!!!!</div>
<div class="t" style="left:688.0px;top:3px;font:bold 11px/11px 'Liberation Sans',sans-serif;color:#fff;letter-spacing:1.158px;transform:scaleX(1.4577);transform-origin:0 0;">*****</div>
<div class="t" style="left:744.0px;top:3px;font:bold 11px/11px 'Liberation Sans',sans-serif;color:#200800;letter-spacing:0.231px;transform:scaleX(1.0557);transform-origin:0 0;-webkit-text-stroke:0.35px #200800">FEJLÉCVERSENY!!KATT!!!!</div>
</div>
<div style="left:940px;top:702px;width:14px;height:14px;background:#f08a24"></div>
<div style="left:944px;top:705px;width:0;height:0;border-top:4px solid transparent;border-bottom:4px solid transparent;border-right:5px solid #fff"></div>
<div style="left:961px;top:702px;width:14px;height:14px;background:#f08a24"></div>
<div style="left:965px;top:705px;width:2px;height:8px;background:#fff"></div>
<div style="left:969px;top:705px;width:2px;height:8px;background:#fff"></div>
<div style="left:983px;top:702px;width:14px;height:14px;background:#f08a24"></div>
<div style="left:988px;top:705px;width:0;height:0;border-top:4px solid transparent;border-bottom:4px solid transparent;border-left:5px solid #fff"></div>
<div style="left:0px;top:719px;width:1024px;height:1px;background:#fff"></div>
<div style="left:0px;top:720px;width:1024px;height:21px;background:#d4d0c8"></div>
<div style="left:0px;top:722px;width:750px;height:18px;border-top:1px solid #808080;border-left:1px solid #808080;border-bottom:1px solid #fff;border-right:1px solid #fff"></div>
<svg style="position:absolute;left:1px;top:722px" width="17" height="17" viewBox="0 0 17 17">
<path d="M4.5 0.5h8l3.5 3.5v12h-11.5z" fill="#dde6fa" stroke="#6a70a8" stroke-width="0.9"/>
<path d="M12.5 0.5v3.5h3.5" fill="none" stroke="#6a70a8" stroke-width="0.8"/>
<circle cx="6" cy="8.5" r="4.8" fill="#2a7ad0"/>
<rect x="3.2" y="6" width="5.2" height="1.7" fill="#b8ecff"/>
<rect x="6.2" y="9.4" width="5" height="1.9" fill="#b8ecff"/>
<path d="M0.8 12.5c1-4.5 5-8.5 10.5-9.5" fill="none" stroke="#5aa0f0" stroke-width="0.9"/>
</svg>
<div class="t" style="left:21.0px;top:726px;font:normal 11px/11px 'Liberation Sans',sans-serif;color:#000;letter-spacing:0.007px;">Inserts the Clipboard contents at the insertion point.</div>
<div style="left:752px;top:722px;width:23px;height:18px;border-top:1px solid #808080;border-left:1px solid #808080;border-bottom:1px solid #fff;border-right:1px solid #fff"></div>
<div style="left:777px;top:722px;width:22px;height:18px;border-top:1px solid #808080;border-left:1px solid #808080;border-bottom:1px solid #fff;border-right:1px solid #fff"></div>
<div style="left:801px;top:722px;width:22px;height:18px;border-top:1px solid #808080;border-left:1px solid #808080;border-bottom:1px solid #fff;border-right:1px solid #fff"></div>
<div style="left:825px;top:722px;width:23px;height:18px;border-top:1px solid #808080;border-left:1px solid #808080;border-bottom:1px solid #fff;border-right:1px solid #fff"></div>
<div style="left:849px;top:722px;width:22px;height:18px;border-top:1px solid #808080;border-left:1px solid #808080;border-bottom:1px solid #fff;border-right:1px solid #fff"></div>
<div style="left:873px;top:722px;width:149px;height:18px;border-top:1px solid #808080;border-left:1px solid #808080;border-bottom:1px solid #fff;border-right:1px solid #fff"></div>
<svg style="position:absolute;left:827px;top:722px" width="18" height="16" viewBox="0 0 18 16">
<ellipse cx="7" cy="5" rx="6" ry="3.5" fill="#fff" stroke="#000" stroke-width="1.3"/>
<circle cx="7" cy="5" r="2" fill="#222"/>
<circle cx="12" cy="11" r="4.5" fill="#e01818"/>
<rect x="9" y="10" width="6" height="2" fill="#fff"/>
</svg>
<svg style="position:absolute;left:876px;top:725px" width="13" height="13" viewBox="0 0 13 13">
<circle cx="6.5" cy="6.5" r="6" fill="#1a3aa8"/>
<path d="M2 4c2-1 3 1 4 0s1-3 3-2c1 1 0 3 2 4-1 2-3 1-4 3s-1 3-3 3c0-2-2-3-1-5z" fill="#30b030"/>
</svg>
<div class="t" style="left:893.96px;top:726px;font:normal 11px/11px 'Liberation Sans',sans-serif;color:#000;letter-spacing:0.190px;transform:scaleX(1.0380);transform-origin:0 0;">Internet</div>
<div style="left:0px;top:740px;width:1024px;height:28px;background:#d4d0c8"></div>
<div style="left:0px;top:740px;width:1024px;height:1px;background:#d4d0c8"></div>
<div style="left:0px;top:741px;width:1024px;height:1px;background:#fff"></div>
<div style="left:2px;top:744px;width:52px;height:22px;background:#d4d0c8;border-top:1px solid #fff;border-left:1px solid #fff;border-bottom:1px solid #000;border-right:1px solid #000;box-shadow:inset -1px -1px #808080"></div>
<svg style="position:absolute;left:4px;top:746px" width="17" height="15" viewBox="0 0 17 15">
<path d="M3 1c2-1 4-1 6 0.3l-1.2 6c-2-1-4-1-6-0.2z" fill="#f06a28"/>
<path d="M9.6 1.6c2 1 4 1.1 6 0.3l-1.2 6c-2 0.8-4 0.7-6-0.3z" fill="#6ab83a"/>
<path d="M1.6 8c2-0.8 4-0.8 6 0.3l-1.2 6c-2-1-4-1-6-0.2z" fill="#3a8ee8"/>
<path d="M8.2 8.6c2 1 4 1.1 6 0.3l-1.2 6c-2 0.8-4 0.7-6-0.3z" fill="#f8c420"/>
</svg>
<div class="t" style="left:22.0px;top:749px;font:bold 12px/12px 'Liberation Sans',sans-serif;color:#000;letter-spacing:0.065px;transform:scaleX(1.0144);transform-origin:0 0;">Start</div>
<div style="left:59px;top:744px;width:159px;height:22px;background:#d4d0c8;border-top:1px solid #fff;border-left:1px solid #fff;border-bottom:1px solid #000;border-right:1px solid #000;box-shadow:inset -1px -1px #808080"></div>
<svg style="position:absolute;left:63px;top:747px" width="16" height="16" viewBox="0 0 16 16">
<circle cx="8" cy="8" r="6.5" fill="none" stroke="#f08020" stroke-width="3"/>
<path d="M8 1.5a6.5 6.5 0 0 1 6.5 6.5" fill="none" stroke="#50b030" stroke-width="3"/>
<path d="M1.5 8a6.5 6.5 0 0 0 6.5 6.5" fill="none" stroke="#2060d0" stroke-width="3"/>
<path d="M6 4.5l5 3.5-5 3.5z" fill="#202020"/>
</svg>
<div class="t" style="left:83.0px;top:750px;font:normal 11px/11px 'Liberation Sans',sans-serif;color:#000;letter-spacing:-0.168px;transform:scaleX(0.9723);transform-origin:0 0;">Windows Media Player</div>
<div style="left:222px;top:744px;width:159px;height:22px;background:#eae8e3;border-top:1px solid #000;border-left:1px solid #000;border-bottom:1px solid #fff;border-right:1px solid #fff;box-shadow:inset 1px 1px #808080"></div>
<svg style="position:absolute;left:226px;top:746px" width="17" height="17" viewBox="0 0 17 17">
<path d="M4.5 0.5h8l3.5 3.5v12h-11.5z" fill="#f4f4f0" stroke="#505050" stroke-width="0.9"/>
<path d="M12.5 0.5v3.5h3.5" fill="none" stroke="#505050" stroke-width="0.8"/>
<circle cx="6" cy="8.5" r="4.8" fill="#1f3fc8"/>
<rect x="3.2" y="6" width="5.2" height="1.7" fill="#a8e4ff"/>
<rect x="6.2" y="9.4" width="5" height="1.9" fill="#a8e4ff"/>
<path d="M0.8 12.5c1-4.5 5-8.5 10.5-9.5" fill="none" stroke="#5aa0f0" stroke-width="0.9"/>
</svg>
<div class="t" style="left:247.0px;top:751px;font:bold 11px/11px 'Liberation Sans',sans-serif;color:#000;letter-spacing:0.154px;transform:scaleX(1.0497);transform-origin:0 0;">pintyuke - G-Portál - ...</div>
<div style="left:909px;top:744px;width:112px;height:22px;border-top:1px solid #808080;border-left:1px solid #808080;border-bottom:1px solid #fff;border-right:1px solid #fff"></div>
<svg style="position:absolute;left:913px;top:751px" width="10" height="8" viewBox="0 0 10 8"><path d="M5 1L2 4l3 3M9 1L6 4l3 3" fill="none" stroke="#000" stroke-width="1.6"/></svg>
<svg style="position:absolute;left:927px;top:747px" width="16" height="16" viewBox="0 0 16 16">
<circle cx="8" cy="8" r="7.5" fill="#78c040" stroke="#4a9a20" stroke-width="0.8"/>
<circle cx="8" cy="8" r="4.5" fill="#a8e070"/>
<path d="M6 5h4M6 8h4M6 11h4M7 4v8M9 4v8" stroke="#4a9a20" stroke-width="0.8"/>
</svg>
<svg style="position:absolute;left:946px;top:747px" width="16" height="17" viewBox="0 0 16 17">
<circle cx="7" cy="4" r="3.2" fill="#6ac060"/>
<path d="M1 15c0-5 2.5-8 6-8s6 3 6 8z" fill="#5ab050"/>
<circle cx="11.5" cy="12" r="4" fill="#e01818"/>
<rect x="9" y="11" width="5" height="2" fill="#fff"/>
</svg>
<svg style="position:absolute;left:963px;top:747px" width="17" height="17" viewBox="0 0 17 17">
<rect x="1" y="2" width="10" height="13" fill="#fff" stroke="#000" stroke-width="1.2"/>
<path d="M3 6l3 6 4-9" fill="none" stroke="#1a4ab8" stroke-width="1.5"/>
<path d="M9 9h7v3c0 3-3.5 4.5-3.5 4.5S9 15 9 12z" fill="#30b030"/>
<path d="M8 1l5 0-2 6" fill="none" stroke="#3070c8" stroke-width="1.5"/>
</svg>
<div class="t" style="left:987.0px;top:750px;font:normal 11px/11px 'Liberation Sans',sans-serif;color:#000;letter-spacing:-0.181px;transform:scaleX(0.9743);transform-origin:0 0;">14:58</div>
</body></html>
